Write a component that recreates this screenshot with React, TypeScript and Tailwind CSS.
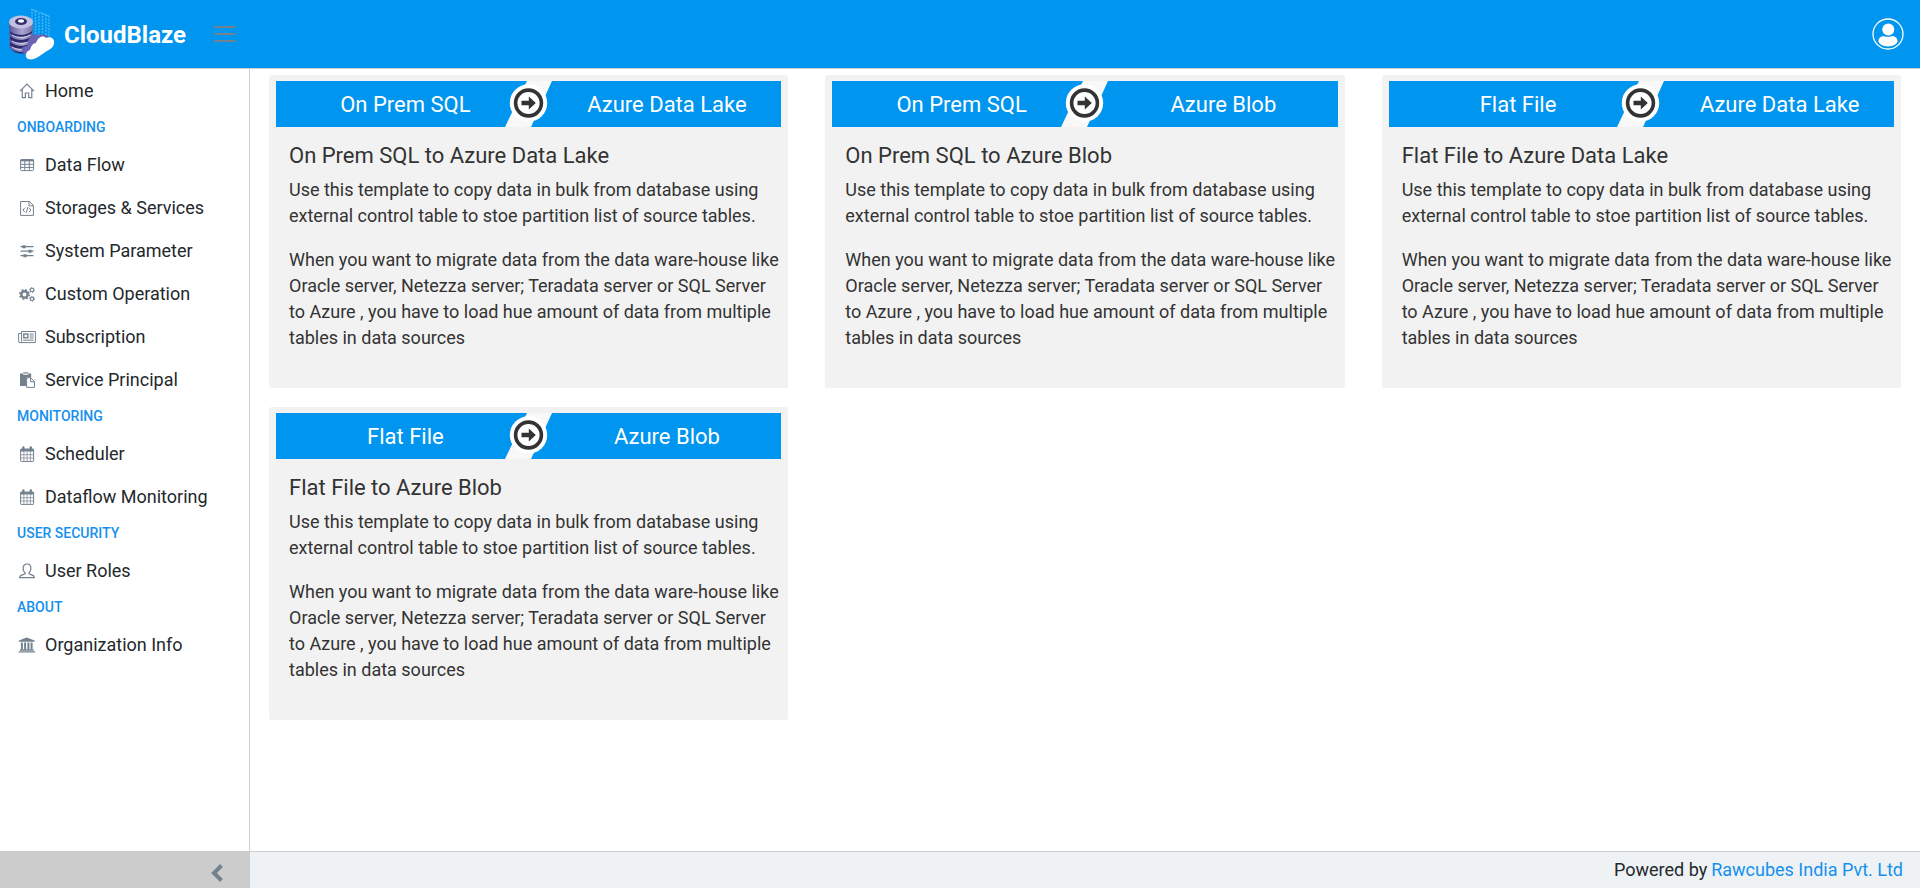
import type { ReactNode } from "react";

function NavSvg({ children }: { children: ReactNode }) {
  return (
    <svg viewBox="0 0 18 18" className="h-[18px] w-[18px] shrink-0" fill="none" stroke="currentColor" strokeWidth="1" aria-hidden="true">
      {children}
    </svg>
  );
}

const HomeIcon = () => (
  <NavSvg>
    <path d="M2 9.2 9 2l7 7.2M4.3 7.4v8.3h3.1V11h3.3v4.7h3.1V7.4" strokeWidth="1.2" />
  </NavSvg>
);

const TableIcon = () => (
  <NavSvg>
    <rect x="2.6" y="3.6" width="13" height="11" rx="1" />
    <path d="M2.4 4.4h13.4" strokeWidth="2" />
    <path d="M2.5 8.3h13M2.5 11.4h13M6.8 5v9.5M11.3 5v9.5" />
  </NavSvg>
);

const FileCodeIcon = () => (
  <NavSvg>
    <path d="M2.6 2.5h8.9l3.9 4v9.9H2.6zM11 2.5v4.3h4.4" />
    <path d="M6.9 8.7 5 11l1.9 2.2M11 8.7l1.9 2.3-1.9 2.2M9.7 8.2l-1.4 5.6" />
  </NavSvg>
);

const SlidersIcon = () => (
  <NavSvg>
    <path d="M2.5 4.7h13M2.5 9.2h13M2.5 13.7h13" strokeWidth="1.2" />
    <path d="M4.4 4.7h3.2M10.4 9.2h3.2M5.4 13.7h3.2" strokeWidth="3" />
  </NavSvg>
);

const CogsIcon = () => (
  <NavSvg>
    <circle cx="6.5" cy="9.4" r="3.2" strokeWidth="2.4" />
    <circle cx="6.5" cy="9.4" r="4.8" strokeWidth="1.4" strokeDasharray="2 1.77" />
    <circle cx="14" cy="5" r="1.7" strokeWidth="1.1" />
    <circle cx="14" cy="5" r="2.5" strokeWidth="0.9" strokeDasharray="1.2 1.41" />
    <circle cx="14" cy="13.8" r="1.7" strokeWidth="1.1" />
    <circle cx="14" cy="13.8" r="2.5" strokeWidth="0.9" strokeDasharray="1.2 1.41" />
  </NavSvg>
);

const NewspaperIcon = () => (
  <NavSvg>
    <path d="M3.6 3.5h13.8v11.1H2.2a1.4 1.4 0 0 1-1.6-1.4V5.4h3" />
    <path d="M3.6 3.5v9.8a1.3 1.3 0 0 1-1.3 1.3" />
    <rect x="5.8" y="6" width="4" height="3.8" strokeWidth="1.4" />
    <path d="M11.6 6h4M11.6 8h4M11.6 10h4M5.2 12.2h10.4" />
  </NavSvg>
);

const PasteIcon = () => (
  <NavSvg>
    <path d="M2 2.5h3.2v1.2h5V2.5h3v3.8H8.5v8.6H2z" fill="currentColor" stroke="none" />
    <path d="M5.3 1.9h5" strokeWidth="1.2" />
    <path d="M8.6 6.8h4.2l3.7 3.8v5.8H8.6zM12.6 6.8v4h3.9" />
  </NavSvg>
);

const CalendarIcon = () => (
  <NavSvg>
    <rect x="2.6" y="4" width="13" height="12.4" rx="0.6" />
    <path d="M2.5 5.3h13.2" strokeWidth="2.4" />
    <path d="M5.4 2.4v2.800M12.8 2.4v2.800" strokeWidth="2.4" strokeLinecap="round" />
    <path d="M2.5 9.7h13M2.5 13h13M5.9 6.5v9.7M9.1 6.5v9.7M12.4 6.5v9.7" strokeWidth="0.7" />
  </NavSvg>
);

const UserIcon = () => (
  <NavSvg>
    <path d="M7 10.8C5.700 9.600 5.100 8 5.100 6.300 5.100 3.600 6.700 2 9 2s3.900 1.600 3.900 4.300c0 1.700-.6 3.300-1.900 4.500v1l3.900 1.600c1 .4 1.400 1 1.500 2.300H1.600c.1-1.300.5-1.900 1.500-2.300L7 11.800z" strokeWidth="1.2" />
  </NavSvg>
);

const BankIcon = () => (
  <NavSvg>
    <path d="M8.700 1.500 16.600 4.600v1.200H.9V4.600z" fill="currentColor" stroke="none" />
    <path d="M3.900 6.500v7M7.100 6.500v7M10.400 6.500v7M13.600 6.500v7" strokeWidth="2" />
    <path d="M2 14h13.600M.6 15.900h16.400" strokeWidth="1.3" />
  </NavSvg>
);

type Item = { label: string; icon: () => ReactNode };
const sections: { title?: string; items: Item[] }[] = [
  { items: [{ label: "Home", icon: HomeIcon }] },
  {
    title: "Onboarding",
    items: [
      { label: "Data Flow", icon: TableIcon },
      { label: "Storages & Services", icon: FileCodeIcon },
      { label: "System Parameter", icon: SlidersIcon },
      { label: "Custom Operation", icon: CogsIcon },
      { label: "Subscription", icon: NewspaperIcon },
      { label: "Service Principal", icon: PasteIcon },
    ],
  },
  {
    title: "Monitoring",
    items: [
      { label: "Scheduler", icon: CalendarIcon },
      { label: "Dataflow Monitoring", icon: CalendarIcon },
    ],
  },
  { title: "User Security", items: [{ label: "User Roles", icon: UserIcon }] },
  { title: "About", items: [{ label: "Organization Info", icon: BankIcon }] },
];

const templates = [
  { from: "On Prem SQL", to: "Azure Data Lake" },
  { from: "On Prem SQL", to: "Azure Blob" },
  { from: "Flat File", to: "Azure Data Lake" },
  { from: "Flat File", to: "Azure Blob" },
];

function Logo() {
  return (
    <svg viewBox="0 0 46 52" className="h-[52px] w-[46px]" aria-hidden="true">
      <defs>
        <linearGradient id="disk" x1="0" x2="1">
          <stop offset="0" stopColor="#5a559c" />
          <stop offset="0.55" stopColor="#a9a6d3" />
          <stop offset="1" stopColor="#77729f" />
        </linearGradient>
      </defs>
      <g stroke="#5cc3fb" fill="none">
        <path d="M23 1v26M26.500 3v24M30 5v23M33.500 5v23M37 7v21M40 8v20" strokeWidth="1.300" strokeDasharray="2 1" opacity="0.75" />
        <path d="M22 1l7 2.500M30 4l10 4" strokeWidth="0.800" />
      </g>
      <path d="M1 14v24c1 5 6 7.500 11.500 7.500S23 43 23.500 38V14z" fill="#2d2a6b" />
      {[36, 30, 24].map((y) => (
        <g key={y}>
          <path d={`M0 ${y - 2}c0 9 24 9 24 0v3c0 9-24 9-24 0z`} fill="url(#disk)" />
          <path d={`M3 ${y + 3}c5 3 12 3.500 18 0`} stroke="#e4e3f3" strokeWidth="0.800" fill="none" />
        </g>
      ))}
      <path d="M0 14v6c0 9 24 9 24 0v-6z" fill="url(#disk)" />
      <ellipse cx="12" cy="14" rx="12" ry="6.500" fill="#c2c0e0" />
      <ellipse cx="12" cy="13.500" rx="6" ry="3.500" fill="#312d70" />
      <ellipse cx="12" cy="13" rx="3" ry="1.700" fill="#fff" />
      <path d="M13 44c-1-4 1-6 5-6 0-8 7-13 12-11 5-2 10 1 11 4L20 49z" fill="#6964b4" />
      <path d="M19 51c-4-2-2-8 2-9 1-4 3-7 6-7 2-6 7-8 10-5 5-2 9 1 8 6-1 4-4 5-7 7l-9 6c-3 2-7 3-10 2z" fill="#fff" />
    </svg>
  );
}

function TemplateCard({ from, to }: { from: string; to: string }) {
  return (
    <article className="rounded-[3px] bg-[#f2f2f2] px-[7px] pt-1.5 pb-[37px]">
      <div className="relative grid h-[46px] grid-cols-2 items-center bg-[#0095ee] pt-0.5 text-center text-[22px] leading-7 text-white">
        <span className="pl-[6px]">{from}</span>
        <span className="pl-[24px]">{to}</span>
        <svg viewBox="0 0 48 46" className="absolute top-0 left-1/2 h-[46px] w-12 -translate-x-1/2" aria-hidden="true">
          <path d="M22 0h25L26 46H0z" fill="#f8f8f8" />
          <circle cx="23.500" cy="22" r="18.700" fill="#fff" />
          <circle cx="23.500" cy="22" r="12.900" fill="none" stroke="#333" strokeWidth="3.600" />
          <path d="M16.500 19.700h7.300v-4.200l7 6.500-7 6.500v-4.200h-7.300z" fill="#333" />
        </svg>
      </div>
      <div className="pt-[13px] pl-[13px] text-[#333]">
        <h2 className="mb-[5px] text-[22px] leading-8">
          {from} to {to}
        </h2>
        <p className="mb-[18px] text-[18px] leading-[26px]">
          Use this template to copy data in bulk from database using external control table to stoe partition list of source tables.
        </p>
        <p className="text-[18px] leading-[26px]">
          When you want to migrate data from the data ware-house like Oracle server, Netezza server; Teradata server or SQL Server to Azure , you have to load hue amount of data from multiple tables in data sources
        </p>
      </div>
    </article>
  );
}

export default function App() {
  return (
    <div className="flex min-h-screen flex-col bg-white font-['Roboto',sans-serif] text-[18px] text-[#23282c]">
      <header className="flex h-[69px] shrink-0 items-center border-b border-[#c8ced3] bg-[#0095ee] pr-4 pl-[9px]">
        <a href="#" className="flex items-center gap-[9px] text-white">
          <Logo />
          <span className="pt-0.5 text-2xl font-bold">CloudBlaze</span>
        </a>
        <button type="button" aria-label="Toggle sidebar" className="ml-7 text-[#73818f]">
          <svg viewBox="0 0 22 18" className="h-[18px] w-[22px]" stroke="currentColor" strokeWidth="2" strokeLinecap="round" aria-hidden="true">
            <path d="M1 2h20M1 9h20M1 16h20" />
          </svg>
        </button>
        <button type="button" aria-label="Account" className="ml-auto">
          <svg viewBox="0 0 32 32" className="h-8 w-8" aria-hidden="true">
            <circle cx="16" cy="16" r="15" fill="none" stroke="#fff" strokeWidth="1.300" />
            <circle cx="16.300" cy="11.500" r="6" fill="#fff" />
            <path d="M16 18.800c2 0 3.500-.6 5-.6 2.600 0 4.600 2.500 4.600 4.800 0 3-4.600 5.400-9.600 5.400S6.400 26 6.400 23c0-2.300 2-4.800 4.600-4.800 1.500 0 3 .6 5 .6z" fill="#fff" />
          </svg>
        </button>
      </header>

      <div className="flex flex-1">
        <aside className="flex w-[250px] shrink-0 flex-col">
          <nav className="flex-1 border-r border-[#c8ced3]">
            {sections.map((section) => (
              <section key={section.title ?? "home"}>
                {section.title && (
                  <h3 className="pl-[17px] text-sm leading-[31px] font-medium text-[#1590ee] uppercase">{section.title}</h3>
                )}
                <ul>
                  {section.items.map(({ label, icon: Icon }) => (
                    <li key={label}>
                      <a href="#" className="flex h-[43px] items-center gap-[9px] pl-[18px] text-[#73818f]">
                        <Icon />
                        <span className="text-[#23282c]">{label}</span>
                      </a>
                    </li>
                  ))}
                </ul>
              </section>
            ))}
          </nav>
          <button type="button" aria-label="Collapse sidebar" className="flex h-[37px] items-center justify-end bg-[#ccc] pr-[27px] text-[#73818f]">
            <svg viewBox="0 0 12 20" className="mt-1.5 h-5 w-3" fill="none" stroke="currentColor" strokeWidth="4" aria-hidden="true">
              <path d="M10.500 2.500 3 10l7.500 7.500" />
            </svg>
          </button>
        </aside>

        <div className="flex min-w-0 flex-1 flex-col">
          <main className="flex-1 px-[19px] pt-1.5">
            <div className="grid grid-cols-3 gap-x-[37px] gap-y-[19px]">
              {templates.map((t) => (
                <TemplateCard key={`${t.from}-${t.to}`} {...t} />
              ))}
            </div>
          </main>
          <footer className="flex h-[37px] items-center justify-end gap-1 border-t border-[#c8ced3] bg-[#eef2f5] pr-[17px] pb-0.5">
            <span>Powered by</span>
            <a href="#" className="text-[#1590ee]">Rawcubes India Pvt. Ltd</a>
          </footer>
        </div>
      </div>
    </div>
  );
}
